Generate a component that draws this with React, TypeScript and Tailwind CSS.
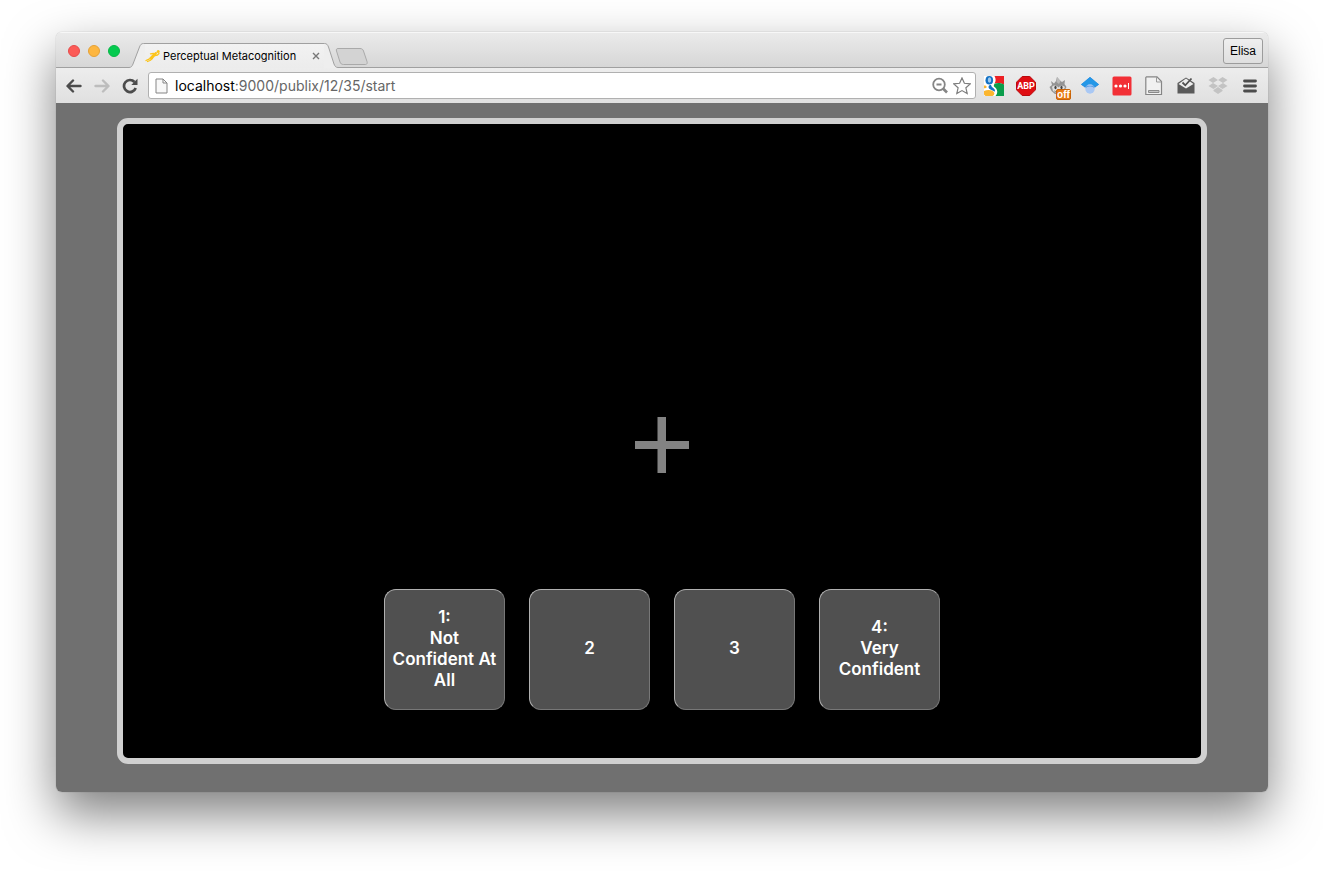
import type { ReactNode } from 'react';

const ratings = [
  { value: '1', lines: ['1:', 'Not', 'Confident At', 'All'] },
  { value: '2', lines: ['2'] },
  { value: '3', lines: ['3'] },
  { value: '4', lines: ['4:', 'Very', 'Confident'] },
];

function ToolButton({ label, children }: { label: string; children: ReactNode }) {
  return (
    <button type="button" aria-label={label} className="flex size-5 shrink-0 items-center justify-center">
      {children}
    </button>
  );
}

function RunnerIcon() {
  return (
    <svg width="16" height="16" viewBox="0 0 16 16" className="shrink-0">
      <path
        d="M1 12.500L4.500 10.800L7 9M2.500 13.500L5 12.500L7.500 10.500M8.500 5.500L5.500 5.800M10 7.500L12.500 7L14 5.500"
        fill="none"
        stroke="#fcc419"
        strokeWidth="1.300"
        strokeLinecap="round"
        strokeLinejoin="round"
      />
      <path d="M4.500 9.800L8 6L10.500 4L12.500 4.500L11 7L8.500 10L5.800 11.500Z" fill="#fcc419" />
      <circle cx="13.200" cy="3.600" r="1.500" fill="#fcc419" />
    </svg>
  );
}

function TabStrip() {
  return (
    <div className="flex h-9 items-end justify-between bg-[linear-gradient(#ebebeb,#d6d6d6)] shadow-[inset_0_1px_0_#f7f7f7,inset_0_-1px_0_#a0a0a0]">
      <div className="flex items-end">
        <div className="flex h-9 items-center gap-2 pt-[2px] pr-[9px] pl-3">
          <button type="button" aria-label="Close window" className="size-3 rounded-full border border-[#e64b4b] bg-[#fc5b57]" />
          <button type="button" aria-label="Minimize window" className="size-3 rounded-full border border-[#e5a136] bg-[#fdb640]" />
          <button type="button" aria-label="Zoom window" className="size-3 rounded-full border border-[#07b747] bg-[#05ca4f]" />
        </div>
        <div className="flex h-[25px]">
          <svg width="16" height="25" viewBox="0 0 16 25" className="shrink-0">
            <path d="M0 25V24C2 24 3 23.500 4 21L10.500 4C11.500 1.500 12.500 .5 14.500 .5H16V25Z" fill="#eeeeee" />
            <path d="M0 24.500C2 24.500 3 23.500 4 21L10.500 4C11.500 1.500 12.500 .5 14.500 .5H16" fill="none" stroke="#a0a0a0" />
          </svg>
          <div className="flex items-center border-t border-[#a0a0a0] bg-[linear-gradient(#f2f2f2,#ececec)]">
            <RunnerIcon />
            <span className="w-[147px] pl-[2px] text-[11px] leading-4 text-black">Perceptual Metacognition</span>
            <button type="button" aria-label="Close tab" className="flex size-4 items-center justify-center">
              <svg width="8" height="8" viewBox="0 0 8 8">
                <path d="M1 1L7 7M7 1L1 7" stroke="#777" strokeWidth="1.400" />
              </svg>
            </button>
          </div>
          <svg width="14" height="25" viewBox="0 0 14 25" className="shrink-0">
            <path d="M14 25V24C12 24 11 23.500 10 21L4.500 4C3.500 1.500 2.500 .5 .5 .5H0V25Z" fill="#eeeeee" />
            <path d="M14 24.500C12 24.500 11 23.500 10 21L4.500 4C3.500 1.500 2.500 .5 .5 .5H0" fill="none" stroke="#a0a0a0" />
          </svg>
        </div>
        <button type="button" aria-label="New tab" className="-ml-[3px] pb-[3px]">
          <svg width="34" height="17" viewBox="0 0 34 17">
            <path
              d="M3 .5H25C27 .5 28 1.500 28.500 3L32 13.500C32.500 15 32 16.500 30.500 16.500H8.500C6.500 16.500 5.500 15.500 5 14L1.500 3C1 1.500 1.500 .5 3 .5Z"
              fill="#d3d3d3"
              stroke="#a9a9a9"
            />
          </svg>
        </button>
      </div>
      <button
        type="button"
        className="mr-[5px] mb-1 h-[26px] rounded-[3px] border border-[#9c9c9c] bg-[linear-gradient(#efefef,#dfdfdf)] px-[6px] font-['Liberation_Sans',sans-serif] text-[12px] leading-4 text-black"
      >
        Elisa
      </button>
    </div>
  );
}

function Extensions() {
  return (
    <div className="flex shrink-0 items-center gap-3">
      <ToolButton label="Google">
        <svg width="20" height="20" viewBox="0 0 20 20">
          <path d="M0 0H20V20H0Z" fill="#fff" />
          <path d="M10.500 0H20V8.500C17 7 14 6.500 10.500 7.500C12 5 12 3 10.500 0Z" fill="#ec2024" />
          <path d="M20 8.500V20H11.500C14.500 16.500 13.500 13 10 10.500C9.500 10 10 9 10.500 7.800C14 6.500 17 7 20 8.500Z" fill="#0a9d4b" />
          <ellipse cx="5.300" cy="4.300" rx="3.800" ry="4.300" fill="#1271c4" />
          <ellipse cx="5.500" cy="4" rx="1.700" ry="2.700" fill="#9cc7ec" />
          <path d="M5 9.500C6 8.500 7.500 9 7.500 10.200C8 11.800 11.500 12.500 11 15.300C10.500 16 9 14.500 6.500 13.500C4.500 12.800 4 11 5 9.500Z" fill="#1271c4" />
          <path d="M0 9.500C2 9.500 3 10 2.500 11.500C2 12.300 1 12.200 0 12.200Z" fill="#fbb62f" />
          <path d="M0 15C4 13.300 9.500 14 10.300 17C10.500 18.500 9.500 19.500 8.500 20H1.500C.7 19.500 .2 19 0 18.500Z" fill="#fbb62f" />
        </svg>
      </ToolButton>
      <ToolButton label="Adblock Plus">
        <svg width="20" height="20" viewBox="0 0 20 20">
          <path d="M6.200 .5H13.800L19.500 6.200V13.800L13.800 19.500H6.200L.5 13.800V6.200Z" fill="#df0d12" stroke="#b9090d" />
          <text x="10" y="13.400" textAnchor="middle" fontSize="9" fontWeight="700" fontFamily="Roboto, sans-serif" fill="#fff">
            ABP
          </text>
        </svg>
      </ToolButton>
      <ToolButton label="Fox blocker, off">
        <svg width="24" height="24" viewBox="-2 -2 24 24" className="shrink-0 overflow-visible">
          <path d="M3 5L6 7.500L8 5L9 1L12 4.500L14 6L17 4L16.500 8L18.500 11L16.500 15L13 18H7L3.500 15L1.500 11L4 9Z" fill="#949494" />
          <path d="M9 1L12.500 5L11 8L8.500 6Z" fill="#bababa" />
          <path d="M4 11C6 8.500 9 9.500 10.500 11.500C12 9.500 15 9 17 11L15 15L12 17H8L5 15Z" fill="#dedede" />
          <ellipse cx="7.500" cy="11.500" rx="1.100" ry="1.800" fill="#444" />
          <ellipse cx="13.500" cy="11.500" rx="1.100" ry="1.800" fill="#444" />
          <path d="M6.500 15C8 16.500 10 16.500 11 15.500" fill="none" stroke="#666" />
          <rect x="8.500" y="13.500" width="14" height="10" rx="1.500" fill="#e87b13" stroke="#c76309" />
          <text x="15.500" y="22" textAnchor="middle" fontSize="10" fontWeight="700" fontFamily="Liberation Sans, sans-serif" fill="#fff">
            off
          </text>
        </svg>
      </ToolButton>
      <ToolButton label="Scholar">
        <svg width="20" height="20" viewBox="0 0 20 20">
          <path d="M10 1L19 8.500L14.500 12V10H5.500V12L1 8.500Z" fill="#3387dc" />
          <path d="M10 1L19 8.500L14.500 11L10 8.500L5.500 11L1 8.500Z" fill="#2497e7" />
          <circle cx="10" cy="13" r="4.700" fill="#a9c8f4" />
          <path d="M5.400 12.500C7 9.700 13 9.700 14.600 12.500L13.500 9.700H6.500Z" fill="#5f9fe4" />
        </svg>
      </ToolButton>
      <ToolButton label="Password manager">
        <svg width="20" height="20" viewBox="0 0 20 20">
          <rect x=".5" y=".5" width="19" height="19" rx="1.500" fill="#f22f36" />
          <circle cx="4" cy="10" r="1.600" fill="#fff" />
          <circle cx="8.500" cy="10" r="1.600" fill="#fff" />
          <circle cx="13" cy="10" r="1.600" fill="#fff" />
          <path d="M16.500 7V13" stroke="#fff" />
        </svg>
      </ToolButton>
      <ToolButton label="Notes">
        <svg width="20" height="20" viewBox="0 0 20 20">
          <path d="M2.500 .8H13L17.500 5.500V18.500H1.800V1.500Z" fill="#f1f1f1" stroke="#858585" strokeWidth="1.200" />
          <path d="M12.500 1V6H17.500" fill="none" stroke="#9b9b9b" />
          <path d="M4.500 14.500H15V16.500H4.500Z" fill="#c5c5c5" stroke="#8a8a8a" />
        </svg>
      </ToolButton>
      <ToolButton label="Mail checker">
        <svg width="20" height="20" viewBox="0 0 20 20">
          <path d="M1.500 7L10 1.500L18.500 7V17.500H1.500Z" fill="#5a5a5a" />
          <path d="M2.500 8L10 2.500L17.500 8L10 12.500Z" fill="#ededed" />
          <path d="M6.500 6.500L9.300 9.300L15.500 2.500" fill="none" stroke="#505050" strokeWidth="1.800" />
        </svg>
      </ToolButton>
      <ToolButton label="Dropbox">
        <svg width="20" height="20" viewBox="0 0 20 20" fill="#c3c3c3">
          <path d="M5.500 1L10 4L5 7L.5 4ZM14.500 1L10 4L15 7L19.500 4ZM5 7L.5 10L5.500 13L10 10ZM15 7L10 10L14.500 13L19.500 10ZM5.500 14L10 11L14.500 14V15L10 18L5.500 15Z" />
        </svg>
      </ToolButton>
      <ToolButton label="Menu">
        <svg width="14" height="14" viewBox="0 0 14 14">
          <path d="M1.500 2H12.500M1.500 7H12.500M1.500 12H12.500" stroke="#4c4c4c" strokeWidth="2.800" strokeLinecap="round" />
        </svg>
      </ToolButton>
    </div>
  );
}

function Toolbar() {
  return (
    <div className="flex h-[35px] items-center bg-[linear-gradient(#ededed,#e0e0e0)] px-2">
      <div className="mr-2 flex gap-2">
        <ToolButton label="Back">
          <svg width="16" height="14" viewBox="0 0 16 14" fill="none" stroke="#4c4c4c" strokeWidth="2.400" strokeLinejoin="round" strokeLinecap="round">
            <path d="M7 1.500L1.500 7L7 12.500M2 7H14.500" />
          </svg>
        </ToolButton>
        <ToolButton label="Forward">
          <svg width="16" height="14" viewBox="0 0 16 14" fill="none" stroke="#bdbdbd" strokeWidth="2.400" strokeLinejoin="round" strokeLinecap="round">
            <path d="M9 1.500L14.500 7L9 12.500M14 7H1.500" />
          </svg>
        </ToolButton>
        <ToolButton label="Reload">
          <svg width="16" height="16" viewBox="0 0 16 16">
            <path d="M12.500 4A6 6 0 1 0 13.700 10" fill="none" stroke="#4c4c4c" strokeWidth="2.700" />
            <path d="M15.500 .8V7H9.300Z" fill="#4c4c4c" />
          </svg>
        </ToolButton>
      </div>
      <div className="mr-2 flex h-[27px] min-w-0 flex-1 items-center rounded-[3px] border border-[#b0b0b0] bg-white pr-1 pl-[6px]">
        <svg width="13" height="16" viewBox="0 0 13 16" className="shrink-0">
          <path d="M1 1H8L12 5V15H1Z" fill="#f8f8f8" stroke="#858585" />
          <path d="M8 1V5H12" fill="none" stroke="#858585" />
        </svg>
        <div className="relative ml-[7px] h-5 min-w-0 flex-1 text-[14px] leading-5">
          <input
            aria-label="Address"
            defaultValue="localhost:9000/publix/12/35/start"
            className="block h-5 w-full bg-transparent p-0 text-[#666] outline-none"
          />
          <span aria-hidden="true" className="pointer-events-none absolute top-0 left-0 bg-white text-black">
            localhost
          </span>
        </div>
        <button type="button" aria-label="Page zoom" className="shrink-0">
          <svg width="18" height="18" viewBox="0 0 18 18" fill="none" stroke="#858585" strokeWidth="1.800">
            <circle cx="8" cy="7.500" r="5.800" />
            <path d="M5.500 7.500H10.500" />
            <path d="M12 11.500L16 15.500" strokeWidth="2.600" />
          </svg>
        </button>
        <button type="button" aria-label="Bookmark this page" className="ml-1 shrink-0">
          <svg width="18" height="18" viewBox="0 0 18 18" fill="#fff" stroke="#7d7d7d" strokeWidth="1.200">
            <path d="M9 .9L11.400 6.300L17.300 6.900L12.900 10.800L14.200 16.600L9 13.600L3.800 16.600L5.100 10.800L.7 6.900L6.600 6.300Z" />
          </svg>
        </button>
      </div>
      <Extensions />
    </div>
  );
}

function Experiment() {
  return (
    <main className="flex flex-1 justify-center bg-[#707070] pt-[15px] pb-7">
      <section
        aria-label="Confidence rating"
        className="flex w-[90%] flex-col items-center rounded-[11px] border-6 border-[#d0d0d0] bg-black pb-12"
      >
        <div className="flex flex-1 items-center pt-[177px]">
          <svg width="54" height="56" viewBox="0 0 54 56" role="img" aria-label="Fixation cross" className="block">
            <path d="M22.500 0H31V24H54V32H31V56H22.500V32H0V24H22.500Z" fill="#838383" />
          </svg>
        </div>
        <div className="flex gap-6">
          {ratings.map((rating) => (
            <button
              key={rating.value}
              type="button"
              className="flex size-[121px] flex-col items-center justify-center rounded-xl border border-t-[#b0b0b0] border-r-[#777] border-b-[#777] border-l-[#b0b0b0] bg-[#505050] pb-[2px] text-[17px] leading-[21px] font-semibold text-white"
            >
              {rating.lines.map((line) => (
                <span key={line}>{line}</span>
              ))}
            </button>
          ))}
        </div>
      </section>
    </main>
  );
}

export default function App() {
  return (
    <div className="flex min-h-screen flex-col bg-white px-14 pt-8 pb-[79px] font-['Inter','Liberation_Sans',sans-serif]">
      <div className="flex flex-1 flex-col overflow-hidden rounded-md shadow-[0_0_1px_rgba(0,0,0,0.4),0_22px_50px_rgba(0,0,0,0.5)]">
        <TabStrip />
        <Toolbar />
        <Experiment />
      </div>
    </div>
  );
}
